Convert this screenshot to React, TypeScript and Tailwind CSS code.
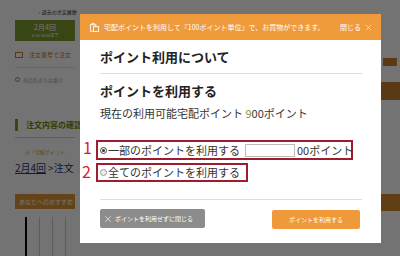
import { X } from 'lucide-react';

const FONT = { fontFamily: '"Noto Sans CJK JP", "Noto Sans", sans-serif' };

function BagIcon() {
  return (
    <svg width="11" height="11" viewBox="0 0 12 12" fill="none" stroke="white" strokeWidth="1">
      <rect x="1.5" y="3" width="6" height="7" />
      <rect x="5" y="5" width="5.5" height="5.5" fill="#ef9a3b" />
      <path d="M3 3V1.8h3V3" />
    </svg>
  );
}

function Page() {
  return (
    <div className="flex h-[256px] w-[400px] flex-col bg-white">
      <div className="h-[3px] bg-[#6b5020]" />
      <div className="flex">
        <div className="flex w-[90px] flex-col px-[15px]">
          <div className="pt-[8px] pl-[24px] text-[5px] leading-[8px] whitespace-nowrap text-[#333]">‹ 過去の注文履歴</div>
          <div className="mt-[4px] flex h-[21px] flex-col items-center justify-center bg-[#7d9a2e] text-white">
            <span className="text-[7px] leading-[9px]">2月4回</span>
            <span className="text-[4px] leading-[6px] whitespace-nowrap">2/16 19:00まで</span>
          </div>
          <div className="mt-[10px] flex items-center gap-[6px] text-[6px] leading-[8px] whitespace-nowrap text-[#c87a20]">
            <span className="h-[6px] w-[8px] border border-[#c87a20]" />
            注文番号で注文
          </div>
          <div className="mt-[8px] flex h-[24px] items-center gap-[3px] border-t border-[#ddd] text-[5px] whitespace-nowrap text-[#aaa]">
            <span className="h-[5px] w-[5px] rounded-full border border-[#888]" />
            商品名または番号
          </div>
          <div className="mt-[28px] border-l-[3px] border-[#7d9a2e] pl-[8px] text-[8px] leading-[12px] font-bold whitespace-nowrap text-[#6b8e23]">
            注文内容の確認
          </div>
          <div className="mt-[6px] h-px bg-[#ccc]" />
          <div className="mt-[10px] pl-[10px] text-[5px] leading-[8px] whitespace-nowrap text-[#c8a030]">※「宅配ポイント</div>
          <div className="mt-[5px] flex text-[10px] leading-[14px] whitespace-nowrap text-[#223a7a]">
            <span className="underline">2月4回</span>
            <span className="ml-[2px]">&gt;注文</span>
          </div>
          <div className="mt-[19px] flex h-[15px] items-center bg-[#e09535] pl-[4px] text-[6px] whitespace-nowrap text-white">
            あなたへのおすすめ
          </div>
          <div className="mt-[8px] flex h-[40px] gap-[12px] pl-[10px]">
            <div className="w-[2px] bg-black" />
            <div className="w-px bg-[#ccc]" />
            <div className="w-px bg-[#ccc]" />
            <div className="w-px bg-[#ccc]" />
          </div>
        </div>
        <div className="flex-1" />
        <div className="flex w-[20px] flex-col">
          <div className="mt-[58px] ml-[3px] h-[8px] w-[14px] bg-[#c8822f]" />
          <div className="mt-[16px] h-[18px] bg-[#c8822f]" />
          <div className="mt-[94px] h-[17px] bg-[#d98a2f]" />
        </div>
      </div>
    </div>
  );
}

export default function App() {
  return (
    <div className="relative h-[256px] w-[400px] overflow-hidden" style={FONT}>
      <Page />
      <div className="absolute inset-0 bg-black/[0.55]" />
      <div className="absolute left-[80px] top-[14px] flex h-[229px] w-[301px] flex-col bg-white">
        <div className="flex h-[26px] items-center bg-[#ef9a3b] pr-[8px] pl-[9px] text-[7px] text-white">
          <BagIcon />
          <span className="ml-[4px] whitespace-nowrap">宅配ポイントを利用して『100ポイント単位』で、お買物ができます。</span>
          <span className="ml-auto flex items-center gap-[3px] text-[7px]">
            閉じる
            <X className="h-[9px] w-[9px]" strokeWidth={1.5} />
          </span>
        </div>
        <div className="flex flex-col px-[20px]">
          <div className="mt-[8px] text-[13px] font-bold leading-[18px] text-[#222]">ポイント利用について</div>
          <div className="mt-[7px] h-px w-[262px] bg-[#ddd]" />
          <div className="mt-[8px] text-[13px] font-bold leading-[18px] text-[#222]">ポイントを利用する</div>
          <div className="mt-[5px] text-[11px] leading-[16px] text-[#333]">
            現在の利用可能宅配ポイント <span className="text-[#8a9a2a]">9</span>00ポイント
          </div>
          <div className="mt-[19px] -ml-[4px] flex h-[20px] w-[257px] items-center border-2 border-[#9e1c2e] pl-[2px] text-[11px] whitespace-nowrap text-[#333]">
            <span className="mr-[1px] flex h-[7px] w-[7px] shrink-0 items-center justify-center rounded-full border border-[#444] bg-white">
              <span className="h-[3px] w-[3px] rounded-full bg-[#333]" />
            </span>
            一部のポイントを利用する
            <span className="ml-[5px] h-[13px] w-[50px] shrink-0 border border-[#bbb] bg-white" />
            <span className="ml-[2px]">00ポイント</span>
          </div>
          <div className="mt-[3px] -ml-[4px] flex h-[19px] w-[152px] items-center border-2 border-[#9e1c2e] pl-[2px] text-[11px] whitespace-nowrap text-[#333]">
            <span className="mr-[1px] h-[7px] w-[7px] shrink-0 rounded-full border border-[#999] bg-[#eee]" />
            全てのポイントを利用する
          </div>
          <div className="mt-[17px] h-px w-[262px] bg-[#ddd]" />
          <div className="mt-[9px] flex items-start justify-between pr-[1px]">
            <div className="flex h-[19px] w-[105px] items-center gap-[2px] rounded-[2px] bg-[#8c8c8c] pl-[3px] text-[6px] whitespace-nowrap text-white">
              <X className="h-[10px] w-[10px]" strokeWidth={1.5} />
              ポイントを利用せずに閉じる
            </div>
            <div className="mt-px flex h-[19px] w-[88px] items-center justify-center rounded-[2px] bg-[#f0993a] text-[6px] text-white">
              ポイントを利用する
            </div>
          </div>
        </div>
      </div>
      <span className="absolute left-[83px] top-[137px] text-[16px] leading-[20px] text-[#d8202e]">1</span>
      <span className="absolute left-[82px] top-[161px] text-[16px] leading-[20px] text-[#d8202e]">2</span>
    </div>
  );
}
